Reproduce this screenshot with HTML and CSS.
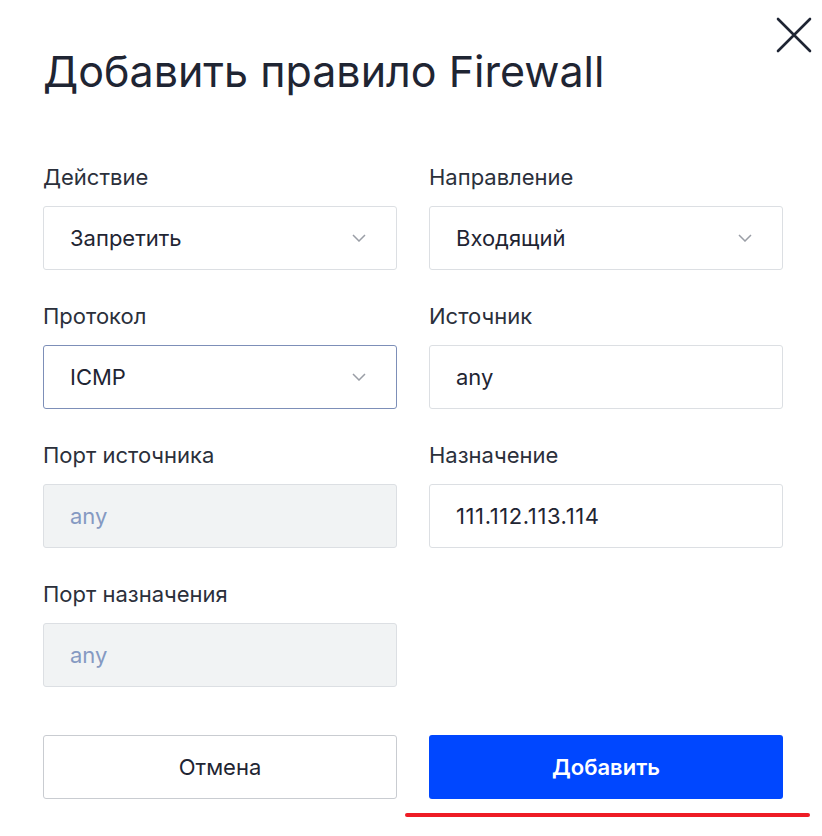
FILE: index.html
```html
<!DOCTYPE html>
<html lang="ru">
<head>
  <meta charset="UTF-8">
  <title>Добавить правило Firewall</title>
  <link rel="stylesheet" href="styles.css">
</head>
<body>
  <div class="modal">
    <!-- Кнопка закрытия -->
    <button class="close" aria-label="Закрыть">
      <svg width="36" height="36" viewBox="0 0 36 36">
        <path d="M2 2 L34 34 M34 2 L2 34" stroke="#1e2433" stroke-width="2.6" stroke-linecap="round" fill="none"/>
      </svg>
    </button>

    <h1 class="title">Добавить правило Firewall</h1>

    <div class="form-grid">
      <div class="field">
        <label class="label">Действие</label>
        <div class="control select">
          <span>Запретить</span>
          <svg class="chevron" width="14" height="8" viewBox="0 0 14 8"><path d="M1 1 L7 7 L13 1" stroke="#9a9ea6" stroke-width="1.5" fill="none"/></svg>
        </div>
      </div>
      <div class="field">
        <label class="label">Направление</label>
        <div class="control select">
          <span>Входящий</span>
          <svg class="chevron" width="14" height="8" viewBox="0 0 14 8"><path d="M1 1 L7 7 L13 1" stroke="#9a9ea6" stroke-width="1.5" fill="none"/></svg>
        </div>
      </div>

      <div class="field">
        <label class="label">Протокол</label>
        <div class="control select focused">
          <span>ICMP</span>
          <svg class="chevron" width="14" height="8" viewBox="0 0 14 8"><path d="M1 1 L7 7 L13 1" stroke="#9a9ea6" stroke-width="1.5" fill="none"/></svg>
        </div>
      </div>
      <div class="field">
        <label class="label">Источник</label>
        <div class="control"><span>any</span></div>
      </div>

      <div class="field">
        <label class="label">Порт источника</label>
        <div class="control disabled"><span>any</span></div>
      </div>
      <div class="field">
        <label class="label">Назначение</label>
        <div class="control"><span class="ip">111.112.113.114</span></div>
      </div>

      <div class="field">
        <label class="label">Порт назначения</label>
        <div class="control disabled"><span>any</span></div>
      </div>
    </div>

    <div class="actions">
      <button class="btn btn-secondary">Отмена</button>
      <button class="btn btn-primary">Добавить</button>
    </div>
    <div class="underline"></div>
  </div>
</body>
</html>
```

FILE: styles.css
```css
/* Общие стили */
body {
  margin: 0;
  background: #fff;
  font-family: Inter, "Noto Sans", sans-serif;
  color: #1f2533;
}

.modal {
  position: relative;
  width: 740px;
  padding: 45px 39px 0 43px;
}

/* Крестик в правом верхнем углу */
.close {
  position: absolute;
  top: 17px;
  left: 776px;
  padding: 0;
  border: 0;
  background: none;
  cursor: pointer;
}

.close svg {
  display: block;
}

.title {
  margin: 0 0 67px;
  font-size: 43px;
  line-height: 52px;
  font-weight: 400;
}

/* Сетка полей формы */
.form-grid {
  display: grid;
  grid-template-columns: 354px 354px;
  column-gap: 32px;
  row-gap: 33px;
}

.label {
  display: block;
  margin-bottom: 16px;
  font-size: 22px;
  line-height: 26px;
  color: #2b303b;
}

.control {
  box-sizing: border-box;
  height: 64px;
  display: flex;
  align-items: center;
  justify-content: space-between;
  padding: 0 30px 0 26px;
  border: 1px solid #dcdfe3;
  border-radius: 3px;
  background: #fff;
  font-size: 22px;
  color: #1f2533;
}

.control .ip {
  letter-spacing: 0.6px;
}

.control.focused {
  border-color: #7d8fb8;
}

.control.disabled {
  background: #f1f3f4;
  color: #8599c2;
}

.chevron {
  display: block;
}

/* Кнопки */
.actions {
  display: grid;
  grid-template-columns: 354px 354px;
  column-gap: 32px;
  margin-top: 48px;
}

.btn {
  height: 64px;
  border-radius: 3px;
  font-family: inherit;
  font-size: 22px;
  cursor: pointer;
}

.btn-secondary {
  border: 1px solid #c9ccd1;
  background: #fff;
  color: #1f2533;
}

.btn-primary {
  border: 0;
  background: #0047ff;
  color: #fff;
  font-weight: 600;
}

/* Красная линия под кнопкой */
.underline {
  width: 405px;
  height: 4px;
  margin: 14px 0 0 362px;
  border-radius: 2px;
  background: #ee1c25;
}
```
